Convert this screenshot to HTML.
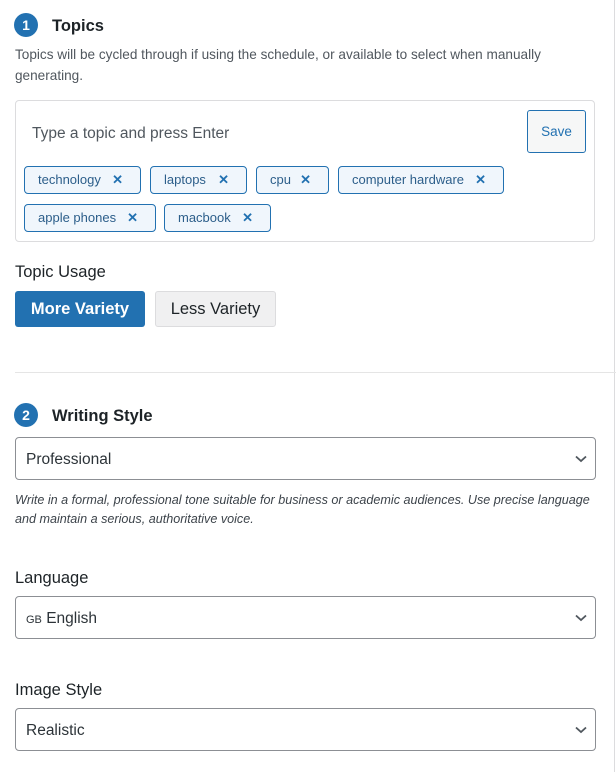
<!DOCTYPE html>
<html><head><style>
*{box-sizing:border-box;margin:0;padding:0}
body{width:616px;height:772px;background:#fff;font-family:"Liberation Sans",sans-serif;color:#1d2327;position:relative;overflow:hidden}
.abs{position:absolute}
.badge{width:24px;height:24px;border-radius:50%;background:#2271b1;color:#fff;font-weight:bold;font-size:14px;text-align:center;line-height:24px}
.h{font-size:16.5px;font-weight:bold;color:#1d2327}
.desc{font-size:13.6px;color:#50575e;line-height:21px}
.tag{position:absolute;height:28px;border:1px solid #2271b1;border-radius:4px;background:#f0f6fc;color:#2c5e8a;font-size:13px;line-height:26px;padding-left:13px}
.tag b{position:absolute;right:17px;top:0;font-size:13px;color:#2271b1}
.sel{position:absolute;left:15px;width:581px;height:43px;border:1px solid #8c8f94;border-radius:4px;font-size:15.5px;line-height:43px;padding-left:10px;color:#2c3338}
.sel svg{position:absolute;right:8px;top:17px}
.lab{font-size:16.5px;color:#1d2327}
</style></head><body>
<div class="abs" style="left:614px;top:0;width:1px;height:772px;background:#dcdcde"></div>

<div class="abs badge" style="left:14px;top:13px">1</div>
<div class="abs h" style="left:52px;top:17px">Topics</div>
<div class="abs desc" style="left:15px;top:44px;width:575px">Topics will be cycled through if using the schedule, or available to select when manually generating.</div>

<div class="abs" style="left:15px;top:100px;width:580px;height:142px;border:1px solid #dcdcde;border-radius:4px"></div>
<div class="abs" style="left:32px;top:125px;font-size:15.5px;color:#50575e">Type a topic and press Enter</div>
<div class="abs" style="left:527px;top:110px;width:59px;height:43px;border:1px solid #2271b1;border-radius:3px;background:#f6f7f7;color:#2271b1;font-size:13.5px;text-align:center;line-height:41px">Save</div>

<div class="tag" style="left:24px;top:166px;width:117px">technology<b>✕</b></div>
<div class="tag" style="left:150px;top:166px;width:97px">laptops<b>✕</b></div>
<div class="tag" style="left:256px;top:166px;width:73px">cpu<b>✕</b></div>
<div class="tag" style="left:338px;top:166px;width:166px">computer hardware<b>✕</b></div>
<div class="tag" style="left:24px;top:204px;width:132px">apple phones<b>✕</b></div>
<div class="tag" style="left:164px;top:204px;width:107px">macbook<b>✕</b></div>

<div class="abs lab" style="left:15px;top:263px">Topic Usage</div>
<div class="abs" style="left:15px;top:291px;width:130px;height:36px;background:#2271b1;border-radius:3px;color:#fff;font-weight:bold;font-size:16.5px;text-align:center;line-height:37px">More Variety</div>
<div class="abs" style="left:155px;top:291px;width:121px;height:36px;background:#f0f0f1;border:1px solid #dcdcde;border-radius:3px;color:#1d2327;font-size:16.5px;text-align:center;line-height:35px">Less Variety</div>

<div class="abs" style="left:15px;top:372px;width:601px;height:1px;background:#e5e5e5"></div>

<div class="abs badge" style="left:14px;top:403px">2</div>
<div class="abs h" style="left:52px;top:407px">Writing Style</div>
<div class="sel" style="top:437px">Professional<svg width="12" height="8" viewBox="0 0 12 8"><path d="M1 1.5l5 4.5 5-4.5" fill="none" stroke="#50575e" stroke-width="1.8"/></svg></div>
<div class="abs" style="left:15px;top:491px;font-size:12.6px;font-style:italic;color:#3c434a;line-height:19px;width:590px">Write in a formal, professional tone suitable for business or academic audiences. Use precise language and maintain a serious, authoritative voice.</div>

<div class="abs lab" style="left:15px;top:569px">Language</div>
<div class="sel" style="top:596px"><span style="font-size:11px">GB</span> English<svg width="12" height="8" viewBox="0 0 12 8"><path d="M1 1.5l5 4.5 5-4.5" fill="none" stroke="#50575e" stroke-width="1.8"/></svg></div>

<div class="abs lab" style="left:15px;top:681px">Image Style</div>
<div class="sel" style="top:708px">Realistic<svg width="12" height="8" viewBox="0 0 12 8"><path d="M1 1.5l5 4.5 5-4.5" fill="none" stroke="#50575e" stroke-width="1.8"/></svg></div>
</body></html>
